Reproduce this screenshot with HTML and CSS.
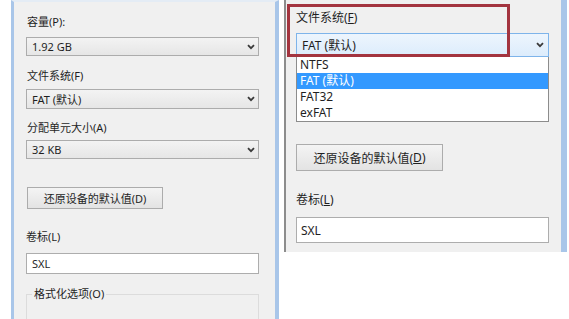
FILE: index.html
```html
<!DOCTYPE html>
<html lang="zh">
<head>
<meta charset="utf-8">
<link rel="stylesheet" href="styles.css">
</head>
<body>
<div class="stage">
  <div class="panel left">
    <div class="label l1">容量(P):</div>
    <div class="select s1"><span>1.92 GB</span><svg class="chev" width="8" height="6" viewBox="0 0 8 6"><path d="M1 1.2 L4 4.2 L7 1.2" fill="none" stroke="#3a3a3a" stroke-width="1.8"/></svg></div>
    <div class="label l2">文件系统(F)</div>
    <div class="select s2"><span>FAT (默认)</span><svg class="chev" width="8" height="6" viewBox="0 0 8 6"><path d="M1 1.2 L4 4.2 L7 1.2" fill="none" stroke="#3a3a3a" stroke-width="1.8"/></svg></div>
    <div class="label l3">分配单元大小(A)</div>
    <div class="select s3"><span>32 KB</span><svg class="chev" width="8" height="6" viewBox="0 0 8 6"><path d="M1 1.2 L4 4.2 L7 1.2" fill="none" stroke="#3a3a3a" stroke-width="1.8"/></svg></div>
    <div class="button b1">还原设备的默认值(D)</div>
    <div class="label l4">卷标(L)</div>
    <div class="input i1">SXL</div>
    <div class="group">
      <span class="legend">格式化选项(O)</span>
    </div>
  </div>
  <div class="panel right">
    <div class="label r1">文件系统(<u>F</u>)</div>
    <div class="select hot"><span>FAT (默认)</span><svg class="chev" width="8" height="6" viewBox="0 0 8 6"><path d="M1 1.2 L4 4.2 L7 1.2" fill="none" stroke="#3a3a3a" stroke-width="1.8"/></svg></div>
    <ul class="list">
      <li>NTFS</li>
      <li class="sel">FAT (默认)</li>
      <li>FAT32</li>
      <li>exFAT</li>
    </ul>
    <div class="button b2">还原设备的默认值(<u>D</u>)</div>
    <div class="label r2">卷标(<u>L</u>)</div>
    <div class="input i2">SXL</div>
    <div class="mark"></div>
  </div>
</div>
</body>
</html>
```
FILE: styles.css
```css
html, body {
  margin: 0;
  padding: 0;
  background: #ffffff;
  overflow: hidden;
}
body {
  width: 569px;
  height: 319px;
  font-family: "Noto Sans", "Noto Sans CJK SC", sans-serif;
  color: #1f1f1f;
}
.stage {
  display: flex;
  align-items: flex-start;
  padding-left: 11px;
  height: 319px;
}
.panel {
  background: #f0f0f0;
  box-sizing: border-box;
  display: flex;
  flex-direction: column;
  align-items: flex-start;
}
.left {
  width: 268px;
  height: 330px;
  border-top: 2px solid #e4ecf5;
  border-left: 3px solid #a9c6e9;
  border-right: 4px solid #a9c6e9;
  padding-left: 12px;
  font-size: 11px;
}
.right {
  position: relative;
  margin-left: 5px;
  width: 283px;
  height: 252px;
  border-left: 2px solid #8d8d8d;
  border-right: 6px solid #a9c6e9;
  padding-left: 10px;
  font-size: 12px;
}
.label {
  line-height: 16px;
  white-space: nowrap;
}
.label u { text-decoration: underline; text-underline-offset: 1px; }
.l1 { margin-top: 12px; margin-left: 1px; }
.l2 { margin-top: 12px; margin-left: 1px; }
.l3 { margin-top: 11px; margin-left: 1px; }
.l4 { margin-top: 20px; }
.select {
  box-sizing: border-box;
  display: flex;
  align-items: center;
  justify-content: space-between;
  border: 1px solid #acacac;
  background: linear-gradient(#f3f3f3, #e6e6e6);
  padding: 0 3px 0 5px;
  white-space: nowrap;
}
.left .select { width: 233px; }
.s1 { margin-top: 7px; height: 21px; }
.s2 { margin-top: 5px; height: 22px; }
.s3 { margin-top: 4px; height: 21px; }
.button {
  box-sizing: border-box;
  display: flex;
  align-items: center;
  justify-content: center;
  border: 1px solid #acacac;
  background: linear-gradient(#f4f4f4, #e3e3e3);
  white-space: nowrap;
}
.b1 { margin-top: 28px; margin-left: 1px; width: 136px; height: 24px; }
.input {
  box-sizing: border-box;
  background: #ffffff;
  border: 1px solid #adadad;
  display: flex;
  align-items: center;
  padding-left: 5px;
}
.i1 { margin-top: 8px; width: 233px; height: 23px; }
.group {
  margin-top: 20px;
  width: 233px;
  height: 40px;
  box-sizing: border-box;
  border: 1px solid #dcdcdc;
  position: relative;
  background: #f0f0f0;
}
.legend {
  position: absolute;
  top: -9px;
  left: 5px;
  padding: 0 2px;
  background: #f0f0f0;
  line-height: 16px;
}
.r1 { margin-top: 10px; }
.hot {
  margin-top: 7px;
  width: 253px;
  height: 24px;
  border-color: #7eb4ea;
  background: linear-gradient(#edf5fd, #dcecfc);
  padding-right: 4px;
}
.list {
  list-style: none;
  margin: 0;
  padding: 0;
  width: 253px;
  box-sizing: border-box;
  border: 1px solid #8c8c8c;
  border-top: none;
  background: #ffffff;
}
.list li {
  height: 16px;
  line-height: 16px;
  padding-left: 3px;
}
.list li.sel {
  background: #3399ff;
  color: #ffffff;
}
.b2 { margin-top: 22px; width: 147px; height: 27px; }
.r2 { margin-top: 21px; }
.i2 { margin-top: 9px; width: 253px; height: 26px; padding-left: 4px; }
.mark {
  position: absolute;
  left: 1px;
  top: 4px;
  width: 223px;
  height: 53px;
  box-sizing: border-box;
  border: 3px solid #a3343f;
}
```
